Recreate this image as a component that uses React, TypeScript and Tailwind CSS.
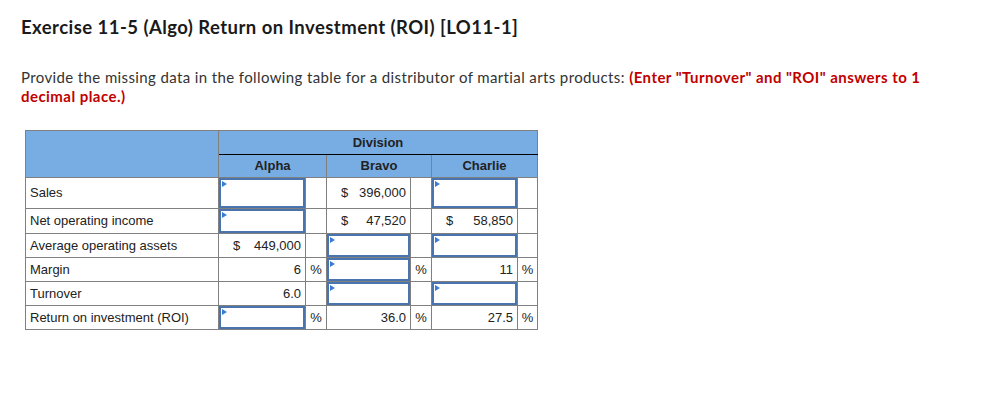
import React from "react";

const Flag = () => (
  <span className="absolute left-[1px] top-[1px] w-0 h-0 border-t-[3px] border-b-[3px] border-l-[5px] border-t-transparent border-b-transparent border-l-[#3a7bd5]" />
);

const Box = ({ h }: { h: number }) => (
  <div
    className="relative border-2 border-[#4a74ad] w-full"
    style={{ height: h }}
  >
    <Flag />
  </div>
);

type Cell =
  | { kind: "box" }
  | { kind: "val"; dollar?: boolean; text: string }
  | { kind: "empty" };

type Row = {
  label: string;
  h: number;
  cells: [Cell, string, Cell, string, Cell, string];
};

const B: Cell = { kind: "box" };

const rows: Row[] = [
  {
    label: "Sales",
    h: 30,
    cells: [B, "", { kind: "val", dollar: true, text: "396,000" }, "", B, ""],
  },
  {
    label: "Net operating income",
    h: 24,
    cells: [
      B,
      "",
      { kind: "val", dollar: true, text: "47,520" },
      "",
      { kind: "val", dollar: true, text: "58,850" },
      "",
    ],
  },
  {
    label: "Average operating assets",
    h: 23,
    cells: [{ kind: "val", dollar: true, text: "449,000" }, "", B, "", B, ""],
  },
  {
    label: "Margin",
    h: 23,
    cells: [{ kind: "val", text: "6" }, "%", B, "%", { kind: "val", text: "11" }, "%"],
  },
  {
    label: "Turnover",
    h: 23,
    cells: [{ kind: "val", text: "6.0" }, "", B, "", B, ""],
  },
  {
    label: "Return on investment (ROI)",
    h: 23,
    cells: [B, "%", { kind: "val", text: "36.0" }, "%", { kind: "val", text: "27.5" }, "%"],
  },
];

const bd = "border border-[#808080]";

function renderCell(c: Cell, h: number) {
  if (c.kind === "box") {
    return (
      <td className={`${bd} p-0 align-top`}>
        <Box h={h} />
      </td>
    );
  }
  if (c.kind === "empty") return <td className={bd} />;
  return (
    <td className={`${bd} px-0 py-0`}>
      <div className="flex items-center justify-between pl-[14px] pr-[4px]" style={{ height: h }}>
        <span>{c.dollar ? "$" : ""}</span>
        <span>{c.text}</span>
      </div>
    </td>
  );
}

export default function App() {
  return (
    <div className="w-[982px] h-[395px] bg-white overflow-hidden pl-[21px] pt-[14px]">
      <h1
        className="text-[18.5px] font-bold text-[#1a1a1a] leading-[26px] tracking-[0.45px]"
        style={{ fontFamily: "Lato, 'Open Sans', sans-serif" }}
      >
        Exercise 11-5 (Algo) Return on Investment (ROI) [LO11-1]
      </h1>
      <p
        className="mt-[28px] w-[912px] text-[15px] leading-[19px] text-[#333] tracking-[0.38px]"
        style={{ fontFamily: "Lato, 'Open Sans', sans-serif" }}
      >
        Provide the missing data in the following table for a distributor of martial arts products:{" "}
        <span className="font-bold text-[#c00000] tracking-[0.45px]">
          (Enter "Turnover" and "ROI" answers to 1 decimal place.)
        </span>
      </p>
      <table
        className="mt-[24px] ml-[4px] border-collapse table-fixed w-[512px] text-[13px] text-[#222]"
        style={{ fontFamily: "'Liberation Sans', Arial, sans-serif" }}
      >
        <colgroup>
          <col className="w-[193px]" />
          <col className="w-[87px]" />
          <col className="w-[21px]" />
          <col className="w-[84px]" />
          <col className="w-[21px]" />
          <col className="w-[86px]" />
          <col className="w-[20px]" />
        </colgroup>
        <thead>
          <tr className="bg-[#78ade4] h-[24px]">
            <th rowSpan={2} className={bd} />
            <th
              colSpan={6}
              className="border border-[#808080] border-b-black font-bold text-center text-[#222] p-0"
            >
              Division
            </th>
          </tr>
          <tr className="bg-[#78ade4] h-[23px]">
            <th colSpan={2} className="border border-[#808080] border-t-black font-bold text-center p-0">
              Alpha
            </th>
            <th colSpan={2} className="border border-[#808080] border-t-black font-bold text-center p-0">
              Bravo
            </th>
            <th colSpan={2} className="border border-[#808080] border-t-black font-bold text-center p-0">
              Charlie
            </th>
          </tr>
        </thead>
        <tbody>
          {rows.map((r) => (
            <tr key={r.label}>
              <td className={`${bd} pl-[4px] py-0`}>
                <div className="flex items-center" style={{ height: r.h }}>
                  {r.label}
                </div>
              </td>
              {renderCell(r.cells[0], r.h)}
              <td className={`${bd} p-0 text-center`}>{r.cells[1]}</td>
              {renderCell(r.cells[2], r.h)}
              <td className={`${bd} p-0 text-center`}>{r.cells[3]}</td>
              {renderCell(r.cells[4], r.h)}
              <td className={`${bd} p-0 text-center`}>{r.cells[5]}</td>
            </tr>
          ))}
        </tbody>
      </table>
    </div>
  );
}
